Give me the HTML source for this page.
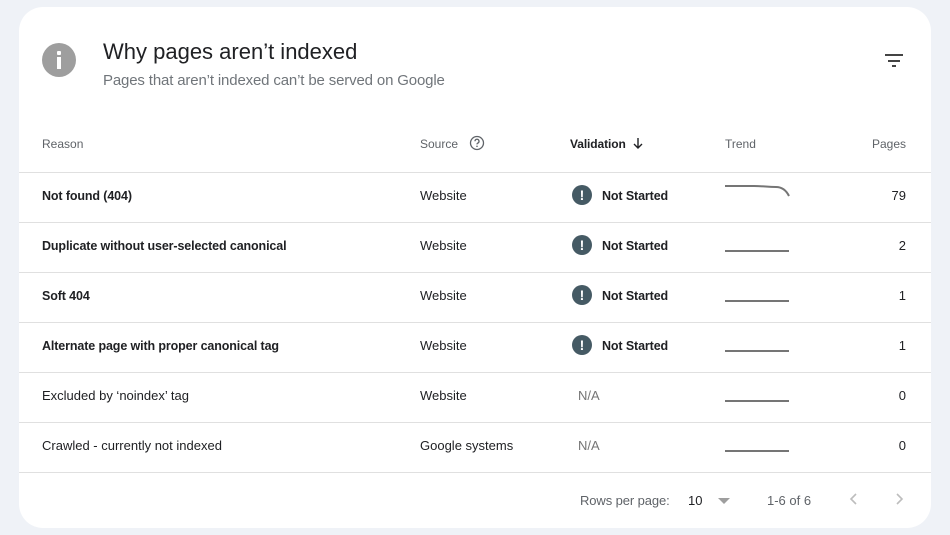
<!DOCTYPE html>
<html><head><meta charset="utf-8"><style>
*{margin:0;padding:0;box-sizing:border-box}
body{width:950px;height:535px;background:#eff2f7;font-family:"Liberation Sans",Arial,sans-serif;position:relative;overflow:hidden}
.card{position:absolute;left:19px;top:7px;width:912px;height:521px;background:#fff;border-radius:24px}
.a{position:absolute;white-space:nowrap}
.h{font-size:12px;color:#5f6368;top:137px}
.line{position:absolute;left:19px;width:912px;height:1px;background:#e0e0e0}
.t{font-size:13px;color:#202124}
.b{font-weight:bold;font-size:12.5px;letter-spacing:-0.12px;margin-top:1px}
.ic{position:absolute;width:20px;height:20px;border-radius:50%;background:#455a64;color:#fff;font-weight:bold;font-size:14px;text-align:center;line-height:20px;left:572px}
.tr{position:absolute;left:725px;width:64px;height:2px;background:#757575}
</style></head><body>
<div class="card"></div>
<div class="a" style="left:42px;top:43px;width:34px;height:34px;border-radius:50%;background:#9e9e9e"></div>
<div class="a" style="left:57px;top:51px;width:4px;height:4px;background:#fff;border-radius:1px"></div>
<div class="a" style="left:57px;top:57px;width:4px;height:12px;background:#fff"></div>
<div class="a" style="left:103px;top:39px;font-size:22px;color:#202124">Why pages aren’t indexed</div>
<div class="a" style="left:103px;top:72px;font-size:15px;color:#70757a;letter-spacing:-0.15px">Pages that aren’t indexed can’t be served on Google</div>
<div class="a" style="left:885px;top:54px;width:18px;height:2px;background:#444"></div>
<div class="a" style="left:888px;top:60px;width:12px;height:2px;background:#444"></div>
<div class="a" style="left:892px;top:65px;width:4px;height:2px;background:#444"></div>

<div class="a h" style="left:42px">Reason</div>
<div class="a h" style="left:420px">Source</div>
<svg class="a" style="left:469px;top:135px" width="16" height="16" viewBox="0 0 16 16"><circle cx="8" cy="8" r="6.5" fill="none" stroke="#5f6368" stroke-width="1.3"/><path d="M6 6.3a2 2 0 1 1 2.8 1.8c-.6.3-.8.7-.8 1.3" fill="none" stroke="#5f6368" stroke-width="1.3"/><circle cx="8" cy="11.3" r=".8" fill="#5f6368"/></svg>
<div class="a h" style="left:570px;color:#202124;font-weight:bold;letter-spacing:-0.1px">Validation</div>
<svg class="a" style="left:632px;top:137px" width="12" height="13" viewBox="0 0 12 13"><path d="M6 1v10M2 7l4 4 4-4" fill="none" stroke="#202124" stroke-width="1.4"/></svg>
<div class="a h" style="left:725px">Trend</div>
<div class="a h" style="right:44px">Pages</div>

<div class="line" style="top:172px"></div>
<div class="line" style="top:222px"></div>
<div class="line" style="top:272px"></div>
<div class="line" style="top:322px"></div>
<div class="line" style="top:372px"></div>
<div class="line" style="top:422px"></div>
<div class="line" style="top:472px"></div>

<div class="a t b" style="left:42px;top:188px">Not found (404)</div>
<div class="a t b" style="left:42px;top:238px">Duplicate without user-selected canonical</div>
<div class="a t b" style="left:42px;top:288px">Soft 404</div>
<div class="a t b" style="left:42px;top:338px">Alternate page with proper canonical tag</div>
<div class="a t" style="left:42px;top:388px">Excluded by ‘noindex’ tag</div>
<div class="a t" style="left:42px;top:438px">Crawled - currently not indexed</div>

<div class="a t" style="left:420px;top:188px">Website</div>
<div class="a t" style="left:420px;top:238px">Website</div>
<div class="a t" style="left:420px;top:288px">Website</div>
<div class="a t" style="left:420px;top:338px">Website</div>
<div class="a t" style="left:420px;top:388px">Website</div>
<div class="a t" style="left:420px;top:438px">Google systems</div>

<div class="ic" style="top:185px">!</div><div class="a t b" style="left:602px;top:188px">Not Started</div>
<div class="ic" style="top:235px">!</div><div class="a t b" style="left:602px;top:238px">Not Started</div>
<div class="ic" style="top:285px">!</div><div class="a t b" style="left:602px;top:288px">Not Started</div>
<div class="ic" style="top:335px">!</div><div class="a t b" style="left:602px;top:338px">Not Started</div>
<div class="a t" style="left:578px;top:388px;color:#757575">N/A</div>
<div class="a t" style="left:578px;top:438px;color:#757575">N/A</div>

<svg class="a" style="left:724px;top:183px" width="68" height="16"><path d="M1 3H30C40 3 43 4 52 4C58 4 62 7 65 13" fill="none" stroke="#757575" stroke-width="2"/></svg>
<div class="tr" style="top:250px"></div>
<div class="tr" style="top:300px"></div>
<div class="tr" style="top:350px"></div>
<div class="tr" style="top:400px"></div>
<div class="tr" style="top:450px"></div>

<div class="a t" style="right:44px;top:188px">79</div>
<div class="a t" style="right:44px;top:238px">2</div>
<div class="a t" style="right:44px;top:288px">1</div>
<div class="a t" style="right:44px;top:338px">1</div>
<div class="a t" style="right:44px;top:388px">0</div>
<div class="a t" style="right:44px;top:438px">0</div>

<div class="a" style="left:580px;top:493px;font-size:13px;color:#5f6368;letter-spacing:-0.1px">Rows per page:</div>
<div class="a" style="left:688px;top:493px;font-size:13px;color:#202124">10</div>
<svg class="a" style="left:717px;top:497px" width="14" height="8"><path d="M1 1h12L7 7z" fill="#9e9e9e"/></svg>
<div class="a" style="left:767px;top:493px;font-size:13px;color:#5f6368">1-6 of 6</div>
<svg class="a" style="left:848px;top:492px" width="12" height="14"><path d="M8 2L3 7l5 5" fill="none" stroke="#bdbdbd" stroke-width="1.6"/></svg>
<svg class="a" style="left:893px;top:492px" width="12" height="14"><path d="M4 2l5 5-5 5" fill="none" stroke="#bdbdbd" stroke-width="1.6"/></svg>
</body></html>
